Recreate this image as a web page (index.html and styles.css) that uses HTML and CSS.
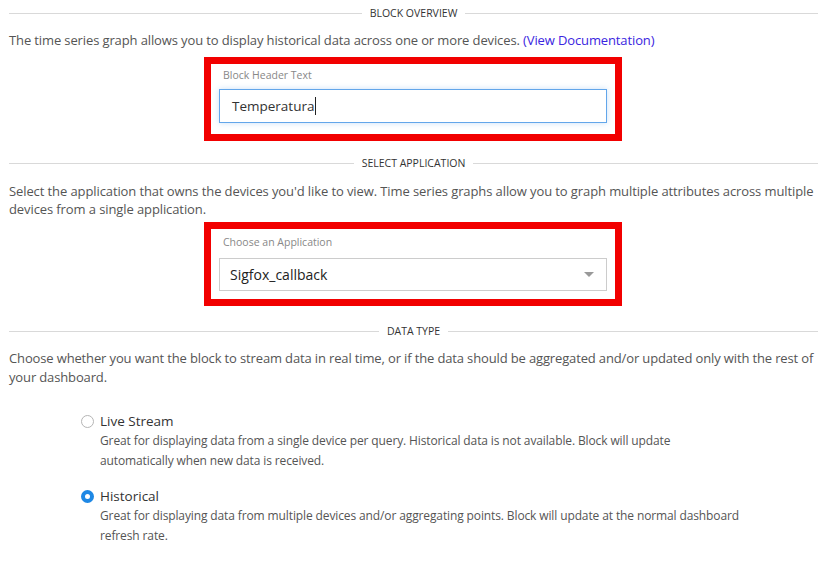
FILE: index.html
```html
<!DOCTYPE html>
<html>
<head>
<meta charset="utf-8">
<link rel="stylesheet" href="styles.css">
</head>
<body>
<div class="page">
  <div class="divider d1"><span>Block Overview</span></div>
  <p class="para p1">The time series graph allows you to display historical data across one or more devices. <a class="doc-link" href="#">(View Documentation)</a></p>
  <div class="highlight h1">
    <label class="field-label">Block Header Text</label>
    <div class="text-input">Temperatura<span class="caret"></span></div>
  </div>

  <div class="divider d2"><span>Select Application</span></div>
  <p class="para p2">Select the application that owns the devices you'd like to view. Time series graphs allow you to graph multiple attributes across multiple devices from a single application.</p>
  <div class="highlight h2">
    <label class="field-label">Choose an Application</label>
    <div class="select-input"><span>Sigfox_callback</span><span class="arrow"></span></div>
  </div>

  <div class="divider d3"><span>Data Type</span></div>
  <p class="para p3">Choose whether you want the block to stream data in real time, or if the data should be aggregated and/or updated only with the rest of your dashboard.</p>

  <div class="options">
    <div class="option o1">
      <div class="option-head"><span class="radio"></span><span class="option-title">Live Stream</span></div>
      <p class="option-desc">Great for displaying data from a single device per query. Historical data is not available. Block will update automatically when new data is received.</p>
    </div>
    <div class="option o2">
      <div class="option-head"><span class="radio checked"></span><span class="option-title">Historical</span></div>
      <p class="option-desc">Great for displaying data from multiple devices and/or aggregating points. Block will update at the normal dashboard refresh rate.</p>
    </div>
  </div>
</div>
</body>
</html>
```
FILE: styles.css
```css
html, body {
  margin: 0;
  padding: 0;
  background: #fff;
}
body {
  font-family: "Open Sans", "Noto Sans", sans-serif;
  color: #555;
}
.page {
  padding: 0 14px 0 9px;
}
.divider {
  display: flex;
  align-items: center;
  gap: 8px;
  height: 26px;
  font-size: 10.5px;
  color: #333;
  text-transform: uppercase;
}
.divider::before, .divider::after {
  content: "";
  flex: 1;
  height: 1px;
  background: #d9d9d9;
}
.d2 { margin-top: 9px; }
.d3 { margin-top: 12px; }
.para {
  margin: 0;
  font-size: 13px;
}
.p1 { margin-top: 5px; line-height: 19px; letter-spacing: -0.12px; }
.p2 { margin-top: 6px; line-height: 18px; letter-spacing: -0.1px; }
.p3 { margin-top: 5px; line-height: 19px; letter-spacing: -0.14px; }
.doc-link {
  color: #3a25e0;
  text-decoration: none;
}
.highlight {
  width: 388px;
  margin-left: 195px;
  border: 7px solid #f20000;
  padding: 0 8px;
}
.h1 { margin-top: 7px; padding-top: 5px; padding-bottom: 11px; }
.h2 { margin-top: 4px; padding-top: 7px; padding-bottom: 8px; }
.field-label {
  display: block;
  font-size: 10.5px;
  line-height: 13px;
  color: #888;
  padding-left: 4px;
}
.h1 .field-label { margin-bottom: 7px; }
.h2 .field-label { margin-bottom: 9px; }
.text-input {
  height: 32px;
  border: 1px solid #62a6ea;
  box-shadow: 0 0 6px rgba(98, 166, 234, 0.35);
  display: flex;
  align-items: center;
  padding-left: 12px;
  font-size: 13.5px;
  color: #333;
}
.caret {
  display: inline-block;
  width: 1px;
  height: 18px;
  background: #222;
  margin-left: 1px;
}
.select-input {
  height: 31px;
  border: 1px solid #ccc;
  display: flex;
  align-items: center;
  justify-content: space-between;
  padding: 0 12px 0 10px;
  font-size: 14px;
  color: #222;
}
.arrow {
  width: 0;
  height: 0;
  border-left: 5px solid transparent;
  border-right: 5px solid transparent;
  border-top: 5px solid #999;
}
.options {
  padding-left: 72px;
  margin-top: 24px;
}
.option-head {
  display: flex;
  align-items: center;
  gap: 6px;
  height: 20px;
}
.radio {
  width: 13px;
  height: 13px;
  border-radius: 50%;
  border: 1px solid #b5b5b5;
  box-sizing: border-box;
  background: #fff;
}
.radio.checked {
  border: 4px solid #1e88e5;
  background: #fff;
}
.option-title {
  font-size: 13.5px;
  color: #333;
}
.option-desc {
  margin: 0 0 0 19px;
  font-size: 12px;
  line-height: 20px;
  letter-spacing: -0.12px;
  width: 643px;
  color: #555;
}
.o2 { margin-top: 15px; }
```
